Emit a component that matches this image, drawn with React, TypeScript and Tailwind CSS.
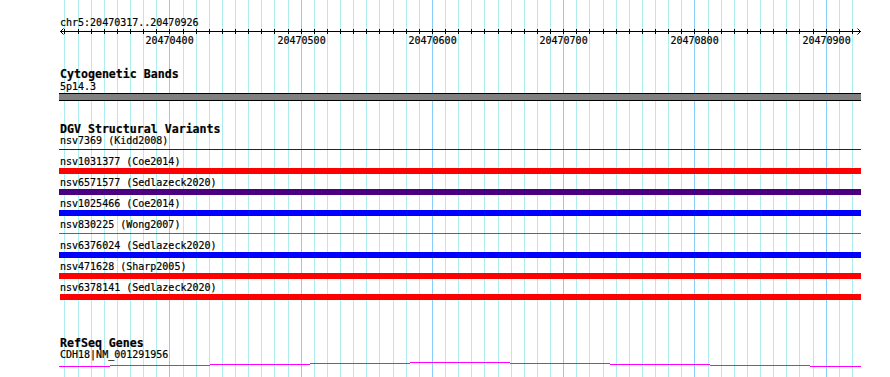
const TRACK_LEFT = 59
const TRACK_WIDTH = 802

// 10bp grid: 20470320 .. 20470920
const gridX = Array.from({ length: 61 }, (_, k) => ({
  x: Math.round(64.4 + 13.125 * k),
  major: k % 10 === 8,
}))

const majors = gridX
  .map((g, k) => ({ ...g, k }))
  .filter((g) => g.major)
  .map((g) => ({ x: g.x, label: String(20470320 + g.k * 10) }))

const variants = [
  { name: "nsv7369 (Kidd2008)", kind: "line", color: "bg-[#4b0082]" },
  { name: "nsv1031377 (Coe2014)", kind: "bar", color: "bg-[#ff0000]" },
  { name: "nsv6571577 (Sedlazeck2020)", kind: "bar", color: "bg-[#4b0082]" },
  { name: "nsv1025466 (Coe2014)", kind: "bar", color: "bg-[#0000ff]" },
  { name: "nsv830225 (Wong2007)", kind: "line", color: "bg-[#a0522d]" },
  { name: "nsv6376024 (Sedlazeck2020)", kind: "bar", color: "bg-[#0000ff]" },
  { name: "nsv471628 (Sharp2005)", kind: "bar", color: "bg-[#ff0000]" },
  { name: "nsv6378141 (Sedlazeck2020)", kind: "bar", color: "bg-[#ff0000]", inset: true },
]

// hat-shaped intron, stepped
const geneSegments = [
  [59, 110, 366],
  [110, 210, 365],
  [210, 310, 364],
  [310, 410, 363],
  [410, 510, 362],
  [510, 610, 363],
  [610, 710, 364],
  [710, 810, 365],
  [810, 861, 366],
]

function GridBackdrop() {
  return (
    <svg className="absolute inset-0" width={890} height={377} shapeRendering="crispEdges">
      {gridX.map((g) => (
        <rect key={g.x} x={g.x} y={0} width={1} height={377} fill={g.major ? "#87cefa" : "#afeeee"} />
      ))}
    </svg>
  )
}

function Ruler() {
  return (
    <div>
      <div className="pl-px leading-[10px] text-[10px]">chr5:20470317..20470926</div>
      <svg width={TRACK_WIDTH} height={8} className="block">
        <g shapeRendering="crispEdges" fill="#000">
          <rect x={1} y={3} width={TRACK_WIDTH - 1} height={1} />
          {gridX.map((g) => (
            <rect key={g.x} x={g.x - TRACK_LEFT} y={1} width={1} height={5} />
          ))}
        </g>
        <polyline points="4.5,0.5 1.5,3.5 4.5,6.5" fill="none" stroke="#000" strokeWidth={1} />
        <polyline points="798.5,0.5 801.5,3.5 798.5,6.5" fill="none" stroke="#000" strokeWidth={1} />
      </svg>
      <div className="relative h-[10px] leading-[10px] text-[10px]">
        {majors.map((m) => (
          <span
            key={m.label}
            className="absolute top-0 w-[48px] text-center"
            style={{ left: m.x - TRACK_LEFT + 0.5 - 24 }}
          >
            {m.label}
          </span>
        ))}
      </div>
    </div>
  )
}

function TrackTitle({ children, className = "" }: any) {
  return <div className={"pl-px text-[11.6px] font-bold leading-[12px] " + className}>{children}</div>
}

function Label({ children }: any) {
  return <div className="pl-px h-[12px] text-[10px] leading-[12px] whitespace-nowrap">{children}</div>
}

export default function App() {
  return (
    <div className="relative h-[377px] w-[890px] overflow-hidden bg-white text-black [font-family:'DejaVu_Sans_Mono',monospace] [-webkit-text-stroke:0.2px_black]">
      <GridBackdrop />
      <div className="relative ml-[59px] flex w-[802px] flex-col pt-[18px]">
        <Ruler />

        <TrackTitle className="mt-[22px]">Cytogenetic Bands</TrackTitle>
        <div className="mt-px">
          <Label>5p14.3</Label>
        </div>
        <div className="h-[8px] border-y border-black bg-[#808080]" />

        <TrackTitle className="mt-[22px]">DGV Structural Variants</TrackTitle>
        <div className="flex flex-col">
          {variants.map((v) => (
            <div key={v.name} className="flex h-[21px] flex-col">
              <Label>{v.name}</Label>
              {v.kind === "line" ? (
                <div className="h-[6px] pt-[2px]">
                  <div className={"h-px " + v.color} />
                </div>
              ) : (
                <div className={"h-[6px] " + v.color + (v.inset ? " ml-px" : "")} />
              )}
            </div>
          ))}
        </div>

        <TrackTitle className="mt-[34px]">RefSeq Genes</TrackTitle>
        <Label>CDH18|NM_001291956</Label>
        <svg width={TRACK_WIDTH} height={8} className="block" shapeRendering="crispEdges">
          {geneSegments.map(([a, b, y]) => (
            <rect key={a} x={a - TRACK_LEFT} y={y - 361} width={b - a} height={1} fill="#ff00ff" />
          ))}
        </svg>
      </div>
    </div>
  )
}
